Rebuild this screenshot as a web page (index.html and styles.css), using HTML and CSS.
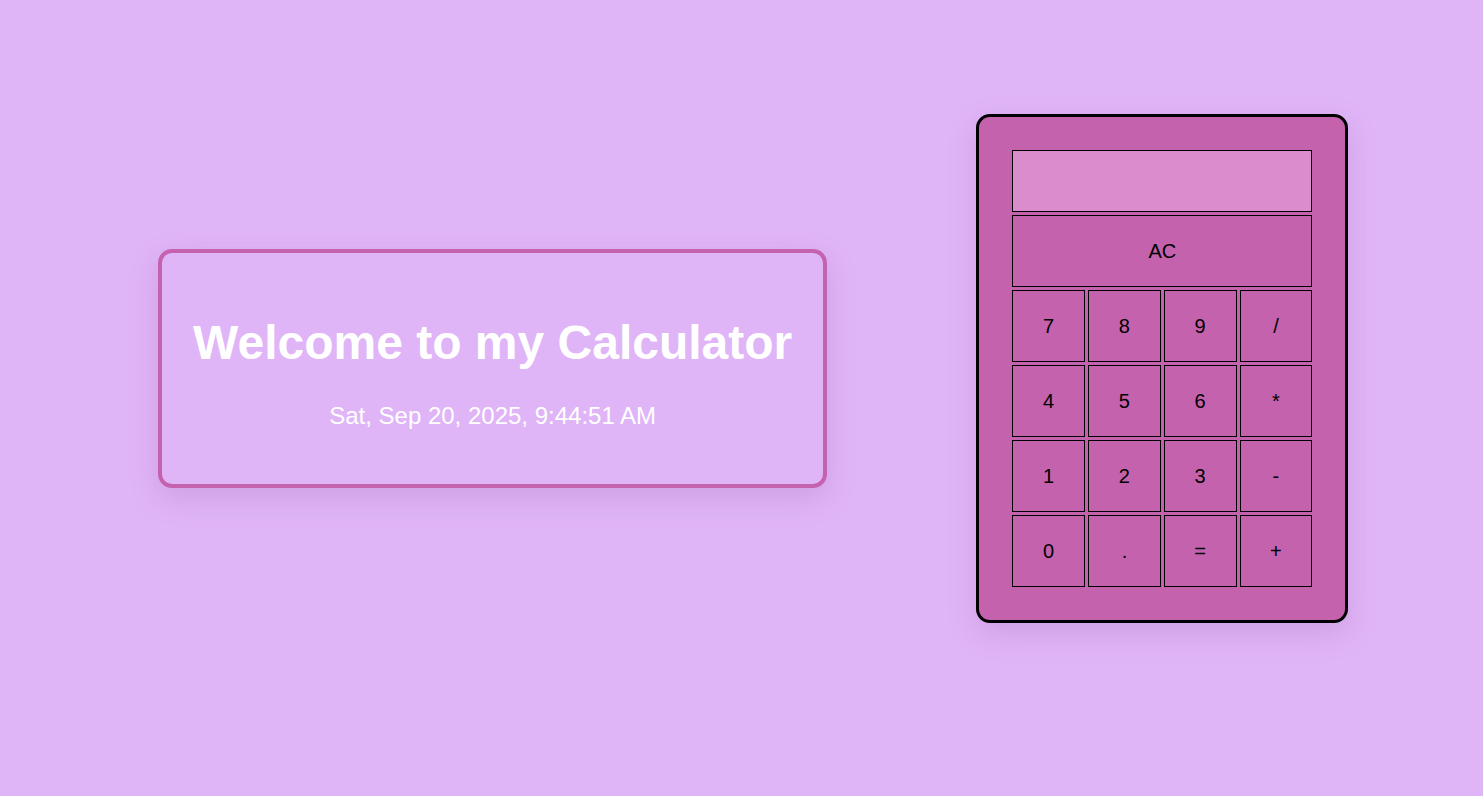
FILE: index.html
```html
<!DOCTYPE html>
<html>
<head>
<meta charset="utf-8">
<title>Calculator</title>
<link rel="stylesheet" href="styles.css">
</head>
<body>
<main class="page">
  <section class="welcome">
    <h1 class="welcome-title">Welcome to my Calculator</h1>
    <p class="welcome-date">Sat, Sep 20, 2025, 9:44:51 AM</p>
  </section>
  <section class="calculator">
    <div class="display"></div>
    <div class="keys">
      <button class="key key-wide">AC</button>
      <button class="key">7</button>
      <button class="key">8</button>
      <button class="key">9</button>
      <button class="key">/</button>
      <button class="key">4</button>
      <button class="key">5</button>
      <button class="key">6</button>
      <button class="key">*</button>
      <button class="key">1</button>
      <button class="key">2</button>
      <button class="key">3</button>
      <button class="key">-</button>
      <button class="key">0</button>
      <button class="key">.</button>
      <button class="key">=</button>
      <button class="key">+</button>
    </div>
  </section>
</main>
</body>
</html>
```
FILE: styles.css
```css
html, body {
  margin: 0;
  padding: 0;
}
body {
  background: #e0b5f7;
  font-family: "Liberation Sans", Arial, sans-serif;
  height: 796px;
  overflow: hidden;
}
.page {
  height: 737px;
  display: flex;
  align-items: center;
  padding-left: 158px;
  gap: 149px;
}
.welcome {
  border: 4px solid #c462b0;
  border-radius: 14px;
  padding: 30px 31px;
  text-align: center;
  box-shadow: 0 10px 30px rgba(120, 60, 140, 0.18);
  color: #ffffff;
}
.welcome-title {
  font-size: 48px;
  font-weight: bold;
  margin: 32px 0;
  white-space: nowrap;
}
.welcome-date {
  font-size: 24px;
  margin: 24px 0;
}
.calculator {
  width: 300px;
  border: 3px solid #000;
  border-radius: 14px;
  padding: 33px;
  background: #c462ae;
  box-shadow: 0 10px 30px rgba(120, 60, 140, 0.18);
}
.display {
  height: 60px;
  border: 1px solid #000;
  background: #da8ccc;
  margin-bottom: 3px;
}
.keys {
  display: grid;
  grid-template-columns: repeat(4, 1fr);
  grid-auto-rows: 72px;
  gap: 3px;
}
.key {
  margin: 0;
  padding: 0;
  border: 1px solid #000;
  background: #c462ae;
  color: #000;
  font-family: "Liberation Sans", Arial, sans-serif;
  font-size: 20px;
}
.key-wide {
  grid-column: span 4;
}
```
